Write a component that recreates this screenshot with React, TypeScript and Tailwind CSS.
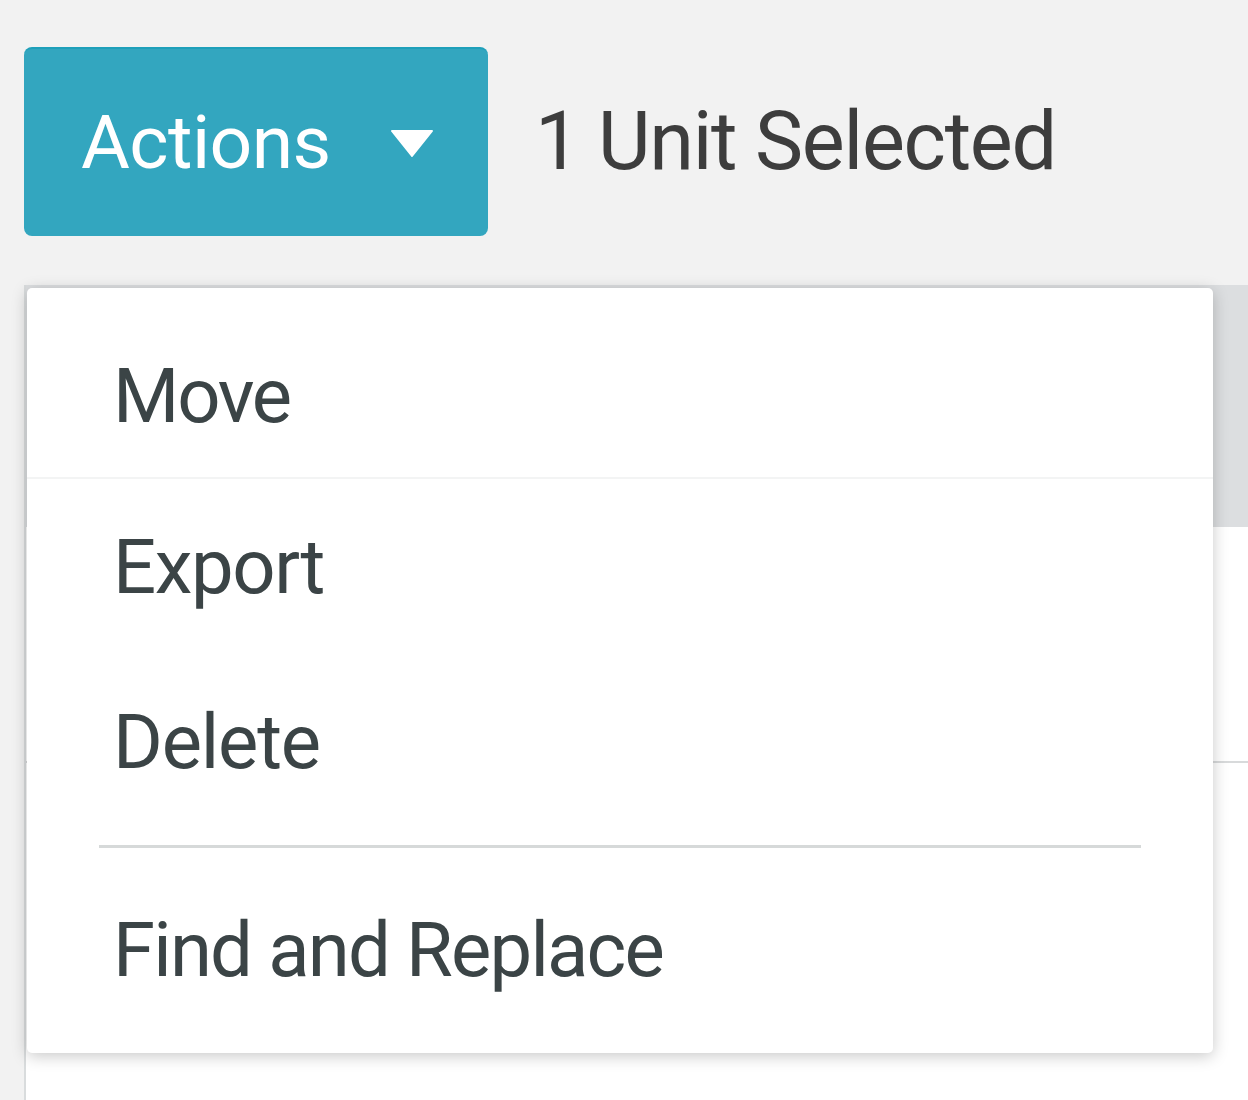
import React from 'react';

const menuFont = { fontFamily: 'Roboto, "Liberation Sans", sans-serif' };

export default function App() {
  return (
    <div className="min-h-[1100px] h-[1100px] overflow-hidden bg-[#f2f2f2] pl-[24px] pt-[47px]" style={menuFont}>
      <div className="relative">
        {/* toolbar */}
        <div className="flex items-center h-[189px]">
          <button className="flex items-center h-[189px] w-[464px] rounded-[8px] border-t-2 border-[#1ea0ba] bg-[#33a6bf] pl-[57px] text-white">
            <span className="text-[75px] leading-none tracking-[-0.6px]">Actions</span>
            <svg className="ml-[60px] mt-[2px]" width="42" height="27" viewBox="0 0 42 27">
              <path d="M1 1 H41 L21 26 Z" fill="#ffffff" stroke="#ffffff" strokeWidth="2" strokeLinejoin="round" />
            </svg>
          </button>
          <span className="ml-[47px] text-[81px] leading-none text-[#3d3d3d] tracking-[-1.3px]">1 Unit Selected</span>
        </div>

        {/* table behind the menu */}
        <div className="mt-[49px] border-l-2 border-[#d9dcdd] bg-white">
          <div className="h-[242px] bg-[#dcdee0]" />
          <div className="h-[236px] border-b-2 border-[#d8dadb]" />
          <div className="h-[400px]" />
        </div>

        {/* dropdown */}
        <div className="absolute left-[3px] top-[241px] w-[1186px] rounded-[5px] bg-white pt-[26px] pb-[17px] text-[#3b4446] shadow-[0_3px_16px_rgba(0,0,0,0.22)]">
          <div className="flex items-center h-[165px] pl-[86px] border-b-2 border-[#f3f4f4]">
            <span className="text-[76px] leading-none tracking-[-2.2px]">Move</span>
          </div>
          <div className="flex items-center h-[176px] pl-[86px]">
            <span className="text-[76px] leading-none tracking-[-1.4px]">Export</span>
          </div>
          <div className="flex items-center h-[174px] pl-[86px]">
            <span className="text-[76px] leading-none tracking-[-1.2px]">Delete</span>
          </div>
          <div className="py-[16px] pl-[72px] pr-[72px]">
            <div className="h-[3px] bg-[#d6d9d9]" />
          </div>
          <div className="flex items-center h-[172px] pl-[86px]">
            <span className="text-[76px] leading-none tracking-[-1.8px]">Find and Replace</span>
          </div>
        </div>
      </div>
    </div>
  );
}
